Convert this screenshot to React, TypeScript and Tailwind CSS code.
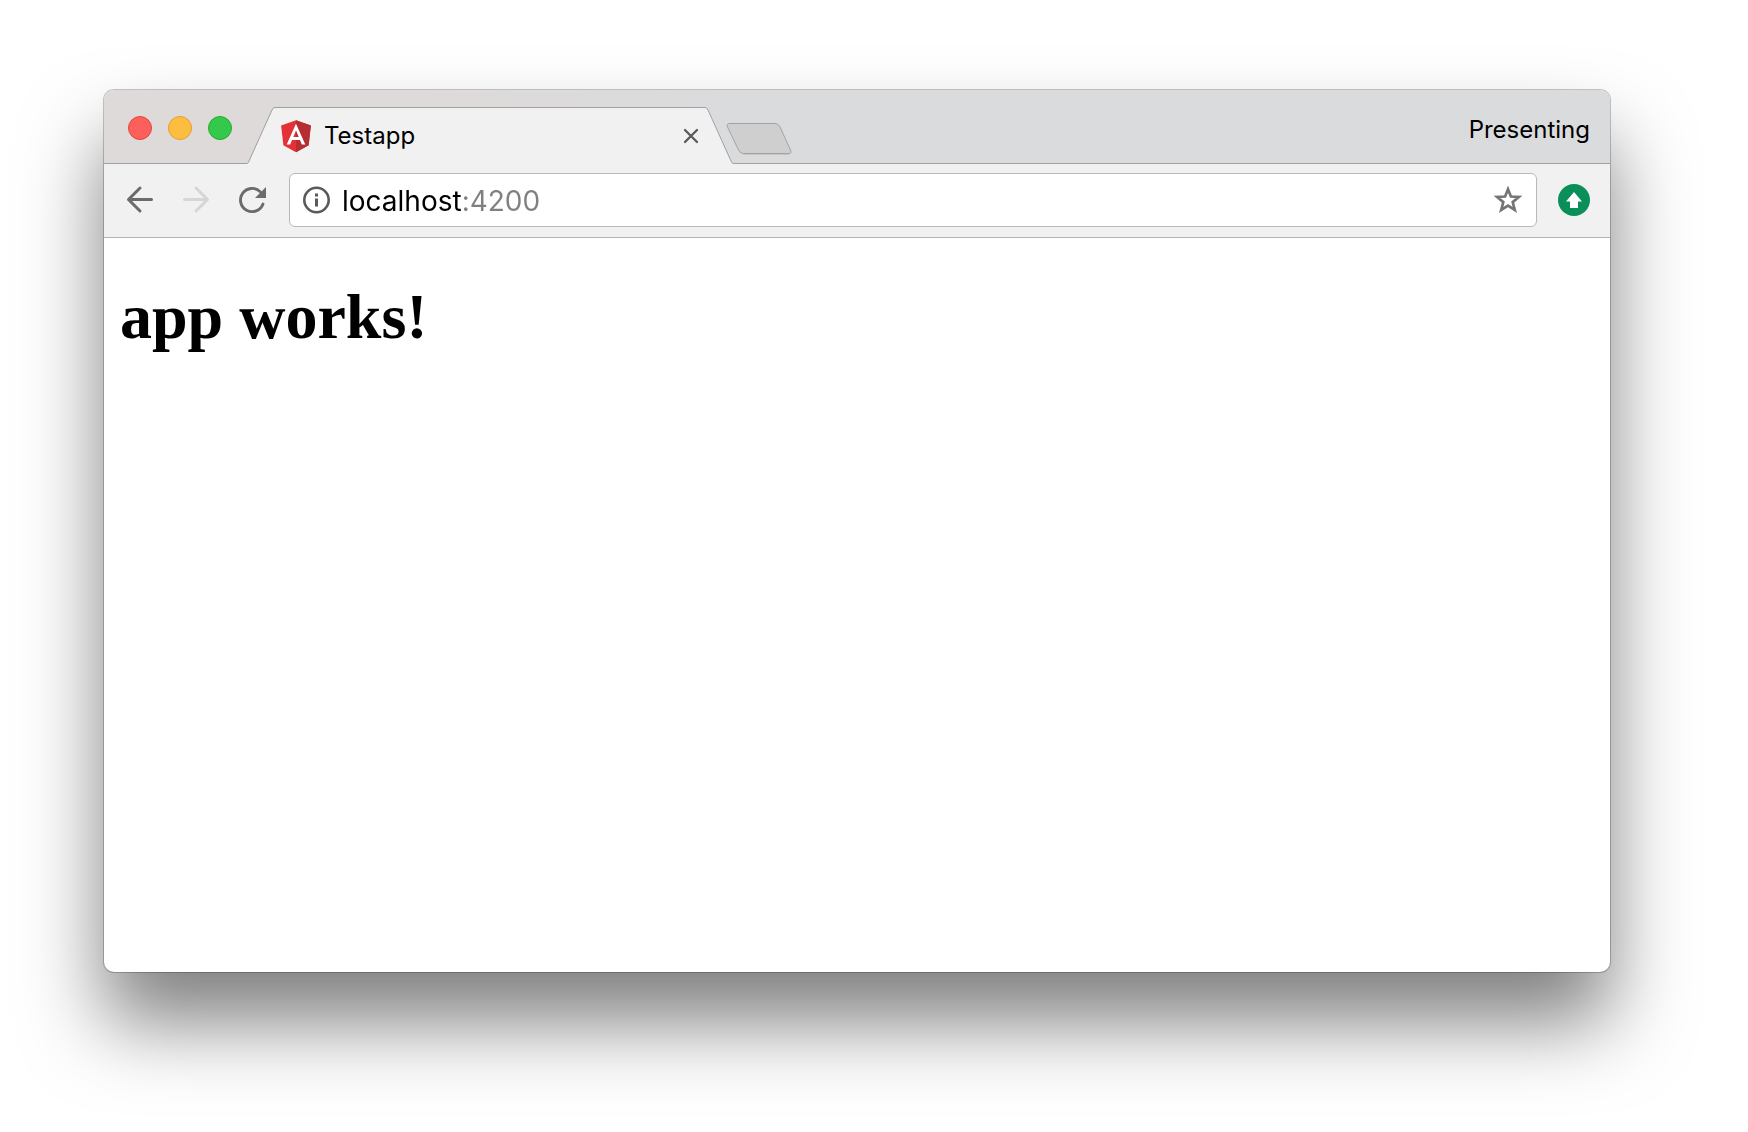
import React from "react";

function WindowButton({ label, tone }: { label: string; tone: string }) {
  return (
    <button type="button" aria-label={label} className={`size-6 rounded-full border ${tone}`} />
  );
}

function AngularLogo() {
  return (
    <svg viewBox="0 0 250 250" className="size-10 shrink-0" aria-hidden="true">
      <path fill="#e23237" d="M125 26 31.900 59.200l14.200 123.100L125 226l78.900-43.700 14.200-123.100z" />
      <path fill="#b52e31" d="M125 26v200l78.900-43.700 14.200-123.100z" />
      <path
        fill="#fff"
        d="M125 48.100 66.800 178.600h21.700l11.700-29.200h49.400l11.700 29.200H183zm17 83.300h-34l17-40.900z"
      />
    </svg>
  );
}

function Tab() {
  return (
    <div className="flex w-[486px] shrink-0">
      <svg viewBox="0 0 28 57" className="h-[57px] w-7 shrink-0" aria-hidden="true">
        <path d="M0 57V56Q1.500 55.500 2 54L25 3Q26 .5 28 .5V57z" fill="#f1f1f1" />
        <path d="M0 56.500Q1.500 56 2 54L25 3Q26 .5 28 .5" fill="none" stroke="#a09e9e" />
      </svg>
      <div className="flex h-[57px] min-w-0 flex-1 items-center border-t border-[#a0a0a0] bg-[#f1f1f1] pl-px">
        <div className="flex flex-1 items-center gap-2">
          <AngularLogo />
          <span className="text-2xl text-black">Testapp</span>
        </div>
        <button type="button" aria-label="Close tab" className="mr-1 p-0.5">
          <svg viewBox="0 0 16 16" className="size-4" fill="none" stroke="#5a5a5a" strokeWidth="2.300" strokeLinecap="round" aria-hidden="true">
            <path d="m2 2 12 12M14 2 2 14" />
          </svg>
        </button>
      </div>
      <svg viewBox="0 0 28 57" className="h-[57px] w-7 shrink-0" aria-hidden="true">
        <path d="M28 57V56Q26.500 55.500 26 54L3 3Q2 .5 0 .5V57z" fill="#f1f1f1" />
        <path d="M28 56.500Q26.500 56 26 54L3 3Q2 .5 0 .5" fill="none" stroke="#a0a1a3" />
      </svg>
    </div>
  );
}

function TabStrip() {
  return (
    <header className="flex h-[74px] items-end bg-[linear-gradient(90deg,#dedad9_0,#dedad9_320px,#dadbdd_640px)]">
      <div className="flex h-[74px] flex-1 items-end shadow-[inset_0_-1px_0_#a0a0a2]">
        <div className="flex h-[74px] w-[143px] shrink-0 items-center gap-4 pl-6 pt-0.5">
          <WindowButton label="Close window" tone="border-[#e2463f] bg-[#fd605b]" />
          <WindowButton label="Minimize window" tone="border-[#dfa032] bg-[#fdbd40]" />
          <WindowButton label="Zoom window" tone="border-[#27aa35] bg-[#34c94a]" />
        </div>
        <Tab />
        <button type="button" aria-label="New tab" className="-ml-2 mb-2 shrink-0">
          <svg viewBox="0 0 68 34" className="h-[34px] w-[68px]" aria-hidden="true">
            <path d="M5 1.500H50Q53.500 1.500 55 5L65.500 28Q67 31.500 64 31.500H18.500Q15 31.500 13.500 28L2.500 5Q1 1.500 5 1.500z" fill="#cfcfcf" stroke="#a3a3a3" />
            <path d="M18 32.500H64" stroke="#c4c5c6" />
          </svg>
        </button>
        <button type="button" className="mb-[18px] ml-auto mr-5 text-2xl text-black">
          Presenting
        </button>
      </div>
    </header>
  );
}

function Toolbar() {
  return (
    <nav aria-label="Browser" className="flex h-[74px] items-center border-b border-[#b4b4b4] bg-[#f1f1f1] px-5 pb-0.5">
      <div className="flex items-center gap-6">
        <button type="button" aria-label="Back">
          <svg viewBox="0 0 32 32" className="size-8" fill="none" stroke="#6b6b6b" strokeWidth="3" strokeLinecap="round" strokeLinejoin="round" aria-hidden="true">
            <path d="M27.500 15.500H4.500M16 4 4.500 15.500 16 27" />
          </svg>
        </button>
        <button type="button" aria-label="Forward" disabled>
          <svg viewBox="0 0 32 32" className="size-8" fill="none" stroke="#d6d6d6" strokeWidth="3" strokeLinecap="round" strokeLinejoin="round" aria-hidden="true">
            <path d="M4.500 15.500H27.500M16 4 27.500 15.500 16 27" />
          </svg>
        </button>
        <button type="button" aria-label="Reload">
          <svg viewBox="0 0 32 32" className="size-8" fill="none" aria-hidden="true">
            <path d="M27 20A11.600 11.600 0 1 1 24.200 7.700" stroke="#6b6b6b" strokeWidth="2.900" strokeLinecap="round" />
            <path d="M30 3V14H19z" fill="#6b6b6b" />
          </svg>
        </button>
      </div>
      <div className="ml-[21px] flex h-[54px] flex-1 items-center rounded-md border border-[#b8b8b8] bg-white px-3">
        <svg viewBox="0 0 28 28" className="size-7 shrink-0" fill="none" aria-hidden="true">
          <circle cx="14.500" cy="14" r="12.200" stroke="#5a5a5a" strokeWidth="2.600" />
          <path d="M13 7.500h3v3h-3zM13 12.500h3v8h-3z" fill="#5a5a5a" />
        </svg>
        <input
          type="text"
          aria-label="Address"
          defaultValue="localhost:4200"
          className="ml-3 min-w-0 flex-1 bg-[linear-gradient(90deg,#000_121px,#808080_121px)] bg-clip-text pt-0.5 text-[28px] leading-9 text-transparent caret-black outline-none"
        />
        <button type="button" aria-label="Bookmark this page">
          <svg viewBox="0 0 32 32" className="size-8" fill="none" stroke="#757575" strokeWidth="2.700" aria-hidden="true">
            <path d="m16 5.200 2.900 7.300 8 .5-6.200 5.100 2.100 7.900L16 21.700 9.200 26l2.100-7.900L5.100 13l8-.5z" />
          </svg>
        </button>
      </div>
      <button type="button" aria-label="Update available" className="ml-[21px]">
        <svg viewBox="0 0 32 32" className="size-8" aria-hidden="true">
          <circle cx="16" cy="16" r="16" fill="#0b8f5a" />
          <path d="M16 8 24 17.500H20V24H12V17.500H8z" fill="#fff" />
        </svg>
      </button>
    </nav>
  );
}

export default function App() {
  return (
    <div className="flex min-h-screen bg-white pb-[160px] pl-[104px] pr-[138px] pt-[90px] font-['Inter',sans-serif]">
      <div className="flex min-w-0 flex-1 flex-col overflow-hidden rounded-[10px] bg-white shadow-[0_0_0_1px_rgba(0,0,0,0.22),0_50px_80px_rgba(0,0,0,0.5)]">
        <TabStrip />
        <Toolbar />
        <main className="flex-1 px-4 py-[43px]">
          <h1 className="font-['Liberation_Serif',serif] text-[64px] font-bold leading-[72px] text-black">
            app works!
          </h1>
        </main>
      </div>
    </div>
  );
}
